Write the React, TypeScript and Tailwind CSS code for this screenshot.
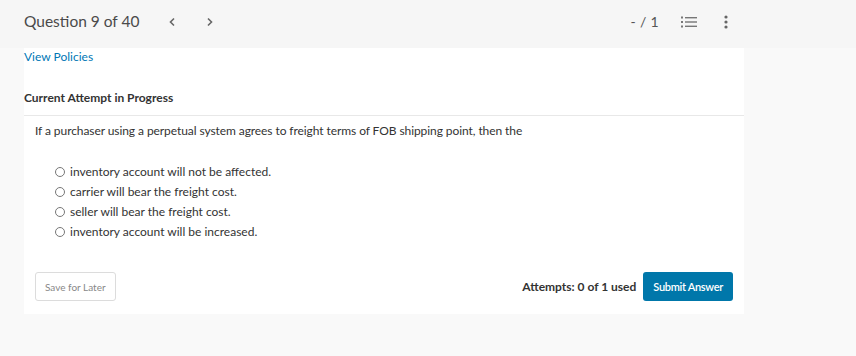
export default function App() {
  const options = [
    "inventory account will not be affected.",
    "carrier will bear the freight cost.",
    "seller will bear the freight cost.",
    "inventory account will be increased.",
  ];

  return (
    <main
      className="min-h-screen bg-[#f9f9f9] text-[#333]"
      style={{ fontFamily: "Lato, 'Open Sans', sans-serif" }}
    >
      {/* header */}
      <header className="h-[48px] bg-[#f6f6f6] flex items-center pb-[5px] pl-6 pr-[128px]">
        <h1 className="text-[15.5px] text-[#4a4a4a]">Question 9 of 40</h1>
        <div className="flex items-center gap-[30px] ml-[29px] text-[#666]">
          <svg width="8" height="10" viewBox="0 0 8 10" fill="none" stroke="currentColor" strokeWidth="1.6">
            <path d="M6 1.5 2.5 5 6 8.5" />
          </svg>
          <svg width="8" height="10" viewBox="0 0 8 10" fill="none" stroke="currentColor" strokeWidth="1.6">
            <path d="M2 1.5 5.5 5 2 8.5" />
          </svg>
        </div>
        <div className="ml-auto flex items-center">
          <span className="text-[14px] text-[#555] tracking-wide">- / 1</span>
          <svg className="ml-[22px] text-[#777]" width="16" height="12" viewBox="0 0 16 12" fill="currentColor">
            <rect x="0" y="0.5" width="2" height="2" />
            <rect x="0" y="5" width="2" height="2" />
            <rect x="0" y="9.5" width="2" height="2" />
            <rect x="4" y="1" width="12" height="1.4" />
            <rect x="4" y="5.3" width="12" height="1.4" />
            <rect x="4" y="9.6" width="12" height="1.4" />
          </svg>
          <svg className="ml-[27px] text-[#666]" width="4" height="14" viewBox="0 0 4 14" fill="currentColor">
            <circle cx="2" cy="2" r="1.6" />
            <circle cx="2" cy="7" r="1.6" />
            <circle cx="2" cy="12" r="1.6" />
          </svg>
        </div>
      </header>

      {/* panel */}
      <section className="ml-6 w-[720px] bg-white text-[12px] leading-[16px]">
        <div className="pt-[1px]">
          <a href="#" className="text-[#0077b5]">
            View Policies
          </a>
        </div>
        <h2 className="mt-[25px] font-bold text-[#333]">Current Attempt in Progress</h2>
        <div className="mt-[9px] border-t border-[#e8e8e8]" />

        <p className="mt-[7px] pl-[11px] text-[#333] tracking-[-0.08px]">
          If a purchaser using a perpetual system agrees to freight terms of FOB shipping point, then the
        </p>

        <ul className="mt-[24px] pl-[31px] flex flex-col gap-[3px]">
          {options.map((o) => (
            <li key={o} className="flex items-center h-[17px] text-[#333]">
              <span className="w-[10px] h-[10px] rounded-full border border-[#777] bg-white mr-[5px]" />
              {o}
            </li>
          ))}
        </ul>

        <div className="mt-[32px] pl-[11px] pr-[11px] pb-[13px] flex items-center">
          <button className="h-[29px] px-[9px] border border-[#dcdcdc] rounded-[3px] text-[10px] text-[#888] bg-white">
            Save for Later
          </button>
          <span className="ml-auto font-bold text-[#333]">Attempts: 0 of 1 used</span>
          <button className="ml-[7px] h-[29px] px-[10px] rounded-[3px] bg-[#0077aa] text-white text-[11px] font-semibold tracking-[-0.3px]">
            Submit Answer
          </button>
        </div>
      </section>
    </main>
  );
}
